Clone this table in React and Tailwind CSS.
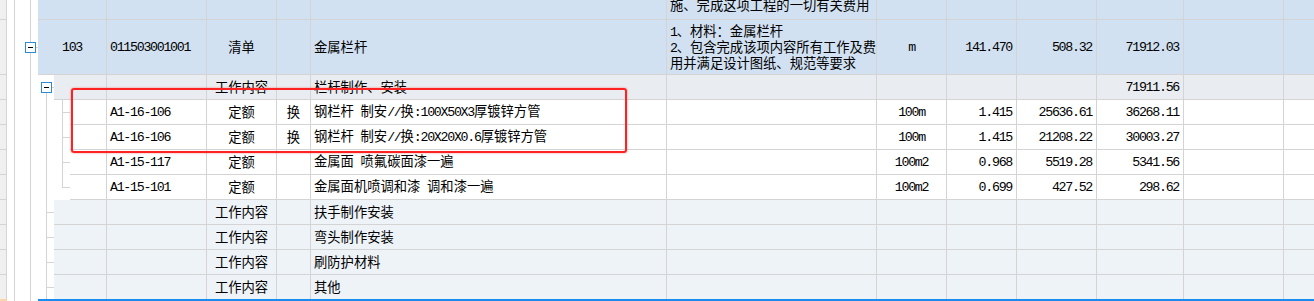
import clsx from 'clsx';

const LINE = 'border-[#d4d4d4]';

// column widths (right border included) and alignment, col A width depends on tree depth
const COLS = [
  { w: '', al: 'justify-center' },
  { w: 'w-[100px]', al: 'justify-start pl-[3px]' },
  { w: 'w-[70px]', al: 'justify-center' },
  { w: 'w-[34px]', al: 'justify-center' },
  { w: 'w-[356px]', al: 'justify-start pl-[3px]' },
  { w: 'w-[210px]', al: 'justify-start pl-[3px]' },
  { w: 'w-[70px]', al: 'justify-center' },
  { w: 'w-[70px]', al: 'justify-end pr-[4px]' },
  { w: 'w-[80px]', al: 'justify-end pr-[4px]' },
  { w: 'w-[87px]', al: 'justify-end pr-[4px]' },
  { w: 'w-[100px]', al: '' },
  { w: 'flex-1', al: '' },
];

// half-width runs get the mono face squeezed to half an em
const Txt = ({ s }) =>
  s
    .split(/([\x20-\x7e]+)/)
    .filter(Boolean)
    .map((p, i) =>
      /^[\x20-\x7e]+$/.test(p) ? (
        <span key={i} className="font-['Liberation_Mono',monospace] tracking-[-1.3px] whitespace-pre">
          {p}
        </span>
      ) : (
        <span key={i}>{p}</span>
      )
    );

const Cells = ({ a, vals, bg, last, top }) =>
  vals.map((v, i) => (
    <div
      key={i}
      className={clsx(
        'flex shrink-0 min-w-0 overflow-hidden',
        LINE,
        i === 0 ? a : COLS[i].w,
        COLS[i].al,
        i < 11 && 'border-r',
        !last && 'border-b',
        top ? 'items-start' : 'items-center',
        bg
      )}
    >
      {typeof v === 'string' ? (
        <span className="whitespace-nowrap">
          <Txt s={v} />
        </span>
      ) : (
        v
      )}
    </div>
  ));

const Gray = ({ last }) => (
  <div className={clsx('w-[7px] shrink-0 bg-[#f0f0f0] border-r', LINE, !last && 'border-b')} />
);

const Base = ({ last }) => (
  <>
    <Gray last={last} />
    <div className={clsx('w-[8px] shrink-0 border-r', LINE)} />
    <div className={clsx('w-[16px] shrink-0 border-r', LINE)} />
  </>
);

const Minus = () => (
  <div className="w-[11px] h-[11px] shrink-0 border border-[#2b8bd6] bg-white flex items-center justify-center">
    <div className="w-[5px] h-px bg-black" />
  </div>
);

const blank = (n) => Array(n).fill('');

const quotas = [
  ['', 'A1-16-106', '定额', '换', '钢栏杆 制安//换:100X50X3厚镀锌方管', '', '100m', '1.415', '25636.61', '36268.11', '', ''],
  ['', 'A1-16-106', '定额', '换', '钢栏杆 制安//换:20X20X0.6厚镀锌方管', '', '100m', '1.415', '21208.22', '30003.27', '', ''],
  ['', 'A1-15-117', '定额', '', '金属面 喷氟碳面漆一遍', '', '100m2', '0.968', '5519.28', '5341.56', '', ''],
  ['', 'A1-15-101', '定额', '', '金属面机喷调和漆 调和漆一遍', '', '100m2', '0.699', '427.52', '298.62', '', ''],
];

const works = ['扶手制作安装', '弯头制作安装', '刷防护材料', '其他'];

export default function App() {
  const prevRow = blank(12);
  prevRow[5] = <div className="-mt-[2px] whitespace-nowrap">施、完成这项工程的一切有关费用</div>;

  const billRow = ['103', '011503001001', '清单', '', '金属栏杆', '', 'm', '141.470', '508.32', '71912.03', '', ''];
  billRow[5] = (
    <div className="whitespace-nowrap">
      <div><Txt s="1、材料：金属栏杆" /></div>
      <div><Txt s="2、包含完成该项内容所有工作及费" /></div>
      <div>用并满足设计图纸、规范等要求</div>
    </div>
  );

  const contentRow = blank(12);
  contentRow[2] = '工作内容';
  contentRow[4] = '栏杆制作、安装';
  contentRow[9] = '71911.56';

  return (
    <div className="relative w-[1314px] h-[301px] overflow-hidden bg-white text-black text-[13.3px] leading-[14px] font-['Noto_Sans_CJK_SC','Liberation_Sans',sans-serif]">
      {/* tail of the previous bill item */}
      <div className="flex h-[20px]">
        <Base />
        <div className="w-[7px] shrink-0" />
        <Cells a="w-[69px]" vals={prevRow} bg="bg-[#d2e1f1]" top />
      </div>

      {/* bill item */}
      <div className="relative flex h-[55px]">
        <Base />
        <div className="w-[7px] shrink-0" />
        <Cells a="w-[69px]" vals={billRow} bg="bg-[#d2e1f1]" />
        <div className="absolute left-[25px] top-[22px] flex items-center">
          <Minus />
          <div className="w-[2px] h-px bg-[#d4d4d4]" />
        </div>
      </div>

      {/* work content group */}
      <div className="flex h-[25px]">
        <Base />
        <div className="w-[10px] shrink-0" />
        <div className="flex flex-col w-[11px] shrink-0 pt-[7px]">
          <Minus />
          <div className={clsx('w-[6px] flex-1 border-r', LINE)} />
        </div>
        <div className={clsx('w-[2px] h-[13px] shrink-0 border-b', LINE)} />
        <Cells a="w-[53px]" vals={contentRow} bg="bg-[#e9edf1]" />
      </div>

      {/* quota lines */}
      {quotas.map((q, i) => (
        <div key={i} className="flex h-[25px]">
          <Base />
          <div className={clsx('w-[16px] shrink-0 border-r', LINE)} />
          <div className={clsx('w-[16px] shrink-0 border-r', LINE, i === quotas.length - 1 && 'h-[13px] self-start')} />
          <div className={clsx('w-[7px] h-[13px] shrink-0 self-start border-b', LINE)} />
          <Cells a="w-[37px]" vals={q} bg="bg-white" />
        </div>
      ))}

      {/* remaining work content */}
      {works.map((w, i) => {
        const last = i === works.length - 1;
        const vals = blank(12);
        vals[2] = '工作内容';
        vals[4] = w;
        return (
          <div key={w} className={clsx('flex', last ? 'h-[24px]' : 'h-[25px]')}>
            <Base last={last} />
            <div className={clsx('w-[16px] shrink-0 border-r', LINE)} />
            <div className={clsx('w-[7px] h-[13px] shrink-0 self-start border-b', LINE)} />
            <Cells a="w-[53px]" vals={vals} bg="bg-[#eef3f8]" last={last} />
          </div>
        );
      })}

      {/* selection bar */}
      <div className="flex h-[2px]">
        <div className="w-[7px] shrink-0 bg-[#fbd6a8]" />
        <div className={clsx('w-[8px] shrink-0 border-r', LINE)} />
        <div className={clsx('w-[16px] shrink-0 border-r', LINE)} />
        <div className="w-[7px] shrink-0" />
        <div className="flex-1 bg-[#1a8cf0]" />
      </div>

      {/* red mark around the replaced quotas */}
      <div className="pointer-events-none absolute left-[71px] top-[88px] w-[556px] h-[65px] rounded-[3px] border-[2.5px] border-[#ff2222] shadow-[0_0_2px_rgba(255,0,0,0.5)]" />
    </div>
  );
}
